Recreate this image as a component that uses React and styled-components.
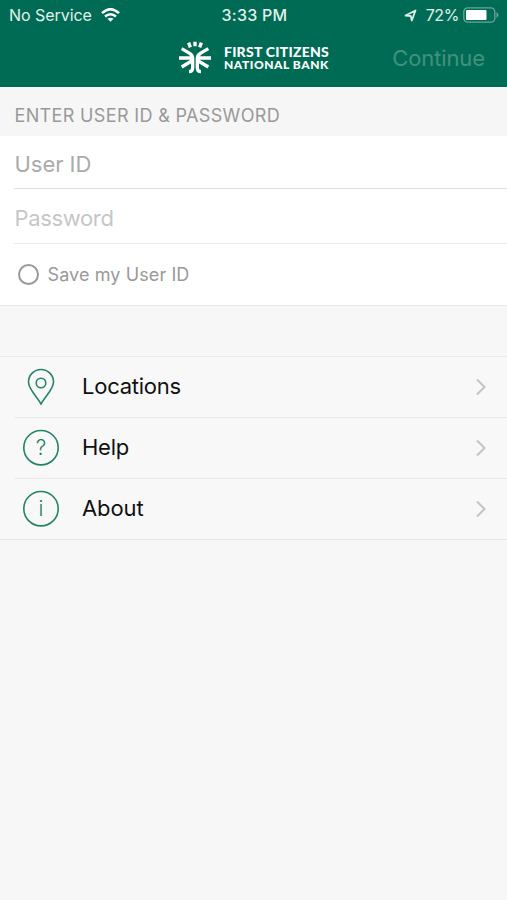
import React from "react";
import styled, { createGlobalStyle } from "styled-components";

const GlobalStyle = createGlobalStyle`
  * { box-sizing: border-box; }
  body { margin: 0; background: #f7f7f7; font-family: Inter, "Liberation Sans", sans-serif; }
`;

const Screen = styled.main`
  width: 100%;
  min-height: 900px;
  background: #f7f7f7;
`;

const Header = styled.header`
  height: 87px;
  background: #006b54;
  color: #fff;
`;

const StatusBar = styled.div`
  display: grid;
  grid-template-columns: 1fr auto 1fr;
  align-items: center;
  height: 30px;
  padding: 0 7px 0 9px;
  font-size: 16px;
  line-height: 30px;
`;

const StatusGroup = styled.div`
  display: flex;
  align-items: center;
  justify-content: ${(p) => (p.$end ? "flex-end" : "flex-start")};
`;

const StatusText = styled.span`
  color: #e2f1ec;
  font-weight: ${(p) => p.$weight || 400};
  letter-spacing: ${(p) => p.$spacing || "0"};
  white-space: nowrap;
`;

const WifiIcon = styled.svg`
  margin-left: 9px;
`;

const ArrowIcon = styled.svg`
  margin-right: 9px;
`;

const BatteryIcon = styled.svg`
  margin-left: 4px;
`;

const NavBar = styled.div`
  display: grid;
  grid-template-columns: 1fr auto 1fr;
  align-items: center;
  height: 55px;
  padding: 0 22px 0 23px;
`;

const Brand = styled.div`
  grid-column: 2;
  display: flex;
  align-items: center;
  gap: 12px;
`;

const BrandName = styled.div`
  padding-top: 1px;
  font-family: Lato, sans-serif;
  font-weight: 900;
  white-space: nowrap;
`;

const BrandLine = styled.div`
  font-size: ${(p) => p.$size};
  line-height: ${(p) => p.$line};
  letter-spacing: ${(p) => p.$spacing};
`;

const ContinueButton = styled.button`
  justify-self: end;
  padding: 0;
  border: 0;
  background: none;
  color: #40927d;
  font: 400 22px/28px Inter, sans-serif;
  letter-spacing: -0.1px;
`;

const SectionTitle = styled.h1`
  margin: 0;
  height: 49px;
  padding: 4px 0 0 14.5px;
  background: #f6f6f6;
  color: #999;
  font-size: 18px;
  font-weight: 400;
  line-height: 49px;
  letter-spacing: 0.35px;
`;

const Form = styled.section`
  background: #fff;
  border-bottom: 1px solid #e6e6e6;
`;

const Field = styled.input`
  display: block;
  width: calc(100% - 14px);
  height: ${(p) => p.$height};
  margin: 0 0 0 14px;
  padding: 4px 0 0 0.5px;
  border: 0;
  border-bottom: 1px solid ${(p) => p.$line};
  border-radius: 0;
  background: none;
  outline: 0;
  font: 400 22px Inter, sans-serif;
  letter-spacing: ${(p) => p.$spacing};
  &::placeholder { color: ${(p) => p.$ink}; opacity: 1; }
`;

const SaveRow = styled.div`
  display: flex;
  align-items: center;
  gap: 8.5px;
  height: 61px;
  padding-left: 18px;
  color: #999;
  font-size: 18px;
`;

const Radio = styled.span`
  width: 21px;
  height: 21px;
  border: 2.5px solid #999;
  border-radius: 50%;
`;

const SaveLabel = styled.span`
  letter-spacing: ${(p) => p.$spacing};
`;

const Menu = styled.nav`
  margin-top: 50px;
  border-top: 1px solid #ebebeb;
  border-bottom: 1px solid #e6e6e6;
  background: #f8f8f8;
`;

const MenuItem = styled.div`
  display: flex;
  align-items: center;
  height: ${(p) => (p.$last ? "60px" : "61px")};
  margin-left: 14px;
  padding: 0 20px 1px 8px;
  border-bottom: ${(p) => (p.$last ? "0" : "1px solid #e9e9e9")};
`;

const MenuLabel = styled.span`
  flex: 1;
  margin-left: 22px;
  padding-bottom: 1.5px;
  color: #101010;
  font-size: 22px;
  letter-spacing: ${(p) => p.$spacing};
`;

const Glyph = styled.text`
  font: 300 ${(p) => p.$size || 21}px Inter, sans-serif;
  fill: #1d8062;
  text-anchor: middle;
`;

function Logo() {
  return (
    <svg width="33" height="33" viewBox="0 -2 99 99" fill="none" stroke="#fff" strokeWidth="10">
      <path d="M48 0v14M29 3l5 14M67 3l-5 14" />
      <path d="M8 21l24 14q9 6 9 15v28q0 12-11 12M88 21L64 35q-9 6-9 15v28q0 12 11 12" />
      <path d="M0 49h37M96 49H59M8 76l30-18M88 76L58 58" />
    </svg>
  );
}

function Pin() {
  return (
    <svg width="38" height="38" viewBox="0 0 38 38" fill="none" stroke="#248466" strokeWidth="1.6">
      <path d="M19 36C15.500 29 6.500 21.500 6.500 14a12.500 12.500 0 0 1 25 0c0 7.500-9 15-12.500 22z" />
      <circle cx="19" cy="15" r="4.800" />
    </svg>
  );
}

function CircledGlyph({ children, size }) {
  return (
    <svg width="38" height="38" viewBox="0 0 38 38">
      <circle cx="19" cy="18.700" r="17.200" fill="none" stroke="#248466" strokeWidth="1.6" />
      <Glyph x="19" y="26" $size={size}>{children}</Glyph>
    </svg>
  );
}

function Chevron() {
  return (
    <svg width="12" height="18" viewBox="0 0 12 18" fill="none" stroke="#c3c3c6" strokeWidth="2">
      <path d="M2 1.500L9.500 9L2 16.500" />
    </svg>
  );
}

const items = [
  { label: "Locations", icon: <Pin />, spacing: "-0.25px" },
  { label: "Help", icon: <CircledGlyph>?</CircledGlyph>, spacing: "-0.25px" },
  { label: "About", icon: <CircledGlyph>i</CircledGlyph>, spacing: "-0.1px" },
];

export default function App() {
  return (
    <Screen>
      <GlobalStyle />
      <Header>
        <StatusBar>
          <StatusGroup>
            <StatusText $spacing="-0.05px">No Service</StatusText>
            <WifiIcon width="19" height="14" viewBox="0 0 19 14" fill="none" stroke="#fff" strokeWidth="2.500">
              <path d="M1 5.200Q9.500-2.600 18 5.200M4 8.500q5.500-4.600 11 0" />
              <path d="M6.500 10.800q3-2.300 6 0l-3 3z" fill="#fff" stroke="none" />
            </WifiIcon>
          </StatusGroup>
          <StatusText $weight={500} $spacing="0.25px">3:33 PM</StatusText>
          <StatusGroup $end>
            <ArrowIcon width="13" height="13" viewBox="0 0 13 13" fill="none" stroke="#d9eee7" strokeWidth="1.800" strokeLinejoin="round">
              <path d="M1.500 6.500L11.500 1.500L7.800 11.500L6.800 7z" />
            </ArrowIcon>
            <StatusText $spacing="-0.4px">72%</StatusText>
            <BatteryIcon width="37" height="16" viewBox="0 0 37 16">
              <rect x=".8" y=".8" width="31" height="14.400" rx="4" fill="none" stroke="#69a898" strokeWidth="1.300" />
              <rect x="3" y="3" width="20.500" height="10" rx="1" fill="#fff" />
              <path d="M33.500 5q4 3 0 6z" fill="#69a898" />
            </BatteryIcon>
          </StatusGroup>
        </StatusBar>
        <NavBar>
          <Brand>
            <Logo />
            <BrandName>
              <BrandLine $size="14px" $line="14px" $spacing="0.25px">FIRST CITIZENS</BrandLine>
              <BrandLine $size="12px" $line="12px" $spacing="0.55px">NATIONAL BANK</BrandLine>
            </BrandName>
          </Brand>
          <ContinueButton>Continue</ContinueButton>
        </NavBar>
      </Header>
      <SectionTitle>ENTER USER ID &amp; PASSWORD</SectionTitle>
      <Form>
        <Field placeholder="User ID" $height="53px" $line="#dedede" $ink="#ababab" $spacing="-0.05px" />
        <Field type="password" placeholder="Password" $height="55px" $line="#ebebeb" $ink="#c6c6c8" $spacing="-0.35px" />
        <SaveRow>
          <Radio />
          <SaveLabel $spacing="0.1px">Save my User ID</SaveLabel>
        </SaveRow>
      </Form>
      <Menu>
        {items.map((item, index) => (
          <MenuItem key={item.label} $last={index === items.length - 1}>
            {item.icon}
            <MenuLabel $spacing={item.spacing}>{item.label}</MenuLabel>
            <Chevron />
          </MenuItem>
        ))}
      </Menu>
    </Screen>
  );
}
